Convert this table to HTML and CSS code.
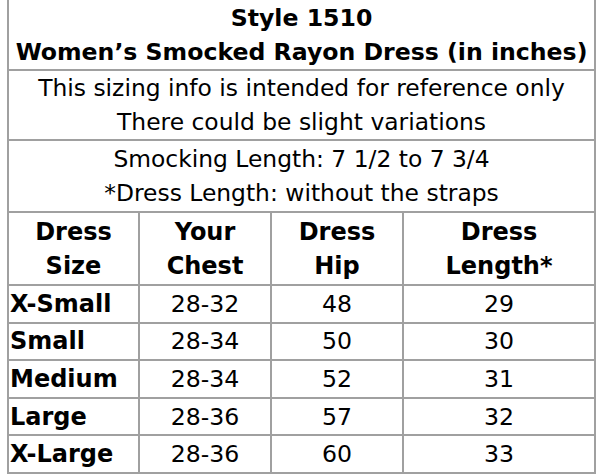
FILE: index.html
```html
<!DOCTYPE html>
<html>
<head>
<meta charset="utf-8">
<link rel="stylesheet" href="styles.css">
</head>
<body>
<table class="size-table">
  <colgroup>
    <col class="c1"><col class="c2"><col class="c3"><col class="c4">
  </colgroup>
  <tr class="title-row">
    <td colspan="4" class="title">Style 1510<br>Women’s Smocked Rayon Dress (in inches)</td>
  </tr>
  <tr class="note-row">
    <td colspan="4" class="note">This sizing info is intended for reference only<br>There could be slight variations</td>
  </tr>
  <tr class="smock-row">
    <td colspan="4" class="note">Smocking Length: 7 1/2 to 7 3/4<br>*Dress Length: without the straps</td>
  </tr>
  <tr class="head-row">
    <th>Dress<br>Size</th>
    <th>Your<br>Chest</th>
    <th>Dress<br>Hip</th>
    <th>Dress<br>Length*</th>
  </tr>
  <tr class="data-row"><td class="size">X-Small</td><td>28-32</td><td>48</td><td>29</td></tr>
  <tr class="data-row"><td class="size">Small</td><td>28-34</td><td>50</td><td>30</td></tr>
  <tr class="data-row"><td class="size">Medium</td><td>28-34</td><td>52</td><td>31</td></tr>
  <tr class="data-row"><td class="size">Large</td><td>28-36</td><td>57</td><td>32</td></tr>
  <tr class="data-row"><td class="size">X-Large</td><td>28-36</td><td>60</td><td>33</td></tr>
</table>
</body>
</html>
```

FILE: styles.css
```css
html, body {
  margin: 0;
  padding: 0;
  background: #ffffff;
}

body {
  padding-left: 7px;
  font-family: "DejaVu Sans", sans-serif;
  color: #000;
}

.size-table {
  border-collapse: collapse;
  table-layout: fixed;
  width: 587px;
}

.c1 { width: 131px; }
.c2 { width: 132px; }
.c3 { width: 132px; }
.c4 { width: 192px; }

.size-table td,
.size-table th {
  border: 2px solid #a0a0a0;
  padding: 0;
  text-align: center;
  vertical-align: middle;
}

.title-row td {
  border-top: none;
  height: 69px;
  font-weight: bold;
  font-size: 23.6px;
  line-height: 34px;
}

.note {
  font-size: 23.4px;
  line-height: 34px;
}

.note-row td { height: 68px; }
.smock-row td { height: 70px; }

.head-row th {
  height: 71px;
  font-size: 24px;
  line-height: 34px;
  font-weight: bold;
}

.data-row td {
  height: 35.6px;
  font-size: 23.6px;
  line-height: 30px;
}

.data-row td.size {
  text-align: left;
  font-weight: bold;
  font-size: 24px;
  padding-left: 1px;
}
```
